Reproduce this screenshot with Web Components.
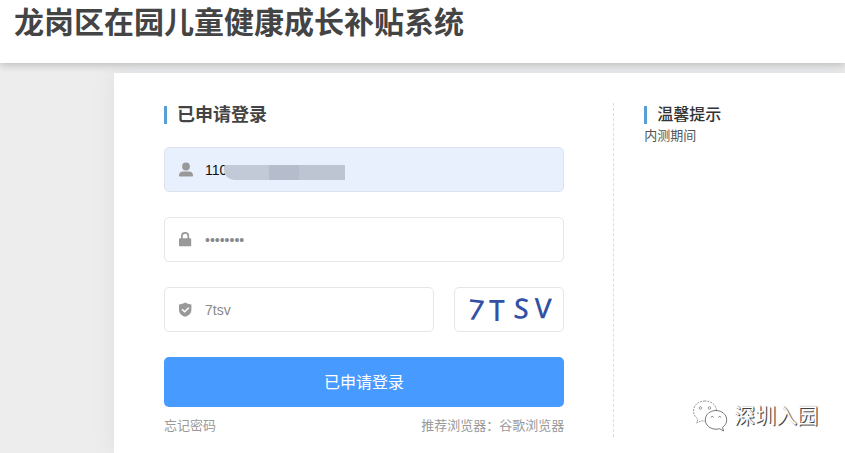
<!DOCTYPE html>
<html lang="zh-CN">
<head>
<meta charset="utf-8">
<meta name="viewport" content="width=device-width, initial-scale=1">
<title>龙岗区在园儿童健康成长补贴系统</title>
<style>
  body {
    margin: 0;
    background-color: #ededed;
    color: #444;
    font-family: "Liberation Sans", "Noto Sans CJK SC", sans-serif;
  }
</style>
</head>
<body>
<login-page>
  <page-header slot="header">龙岗区在园儿童健康成长补贴系统</page-header>
  <login-form slot="form"></login-form>
  <tips-panel slot="tips">内测期间</tips-panel>
  <account-mark slot="mark">深圳入园</account-mark>
</login-page>

<script>
function makeTemplate(html) {
  const template = document.createElement('template');
  template.innerHTML = html;
  return template;
}

// Shared base: clones the template of the class into an open shadow root
class BaseElement extends HTMLElement {
  connectedCallback() {
    if (this.shadowRoot) return;
    const shadowRoot = this.attachShadow({ mode: 'open' });
    shadowRoot.appendChild(this.constructor.template.content.cloneNode(true));
  }
}

class LoginPage extends BaseElement {
  static template = makeTemplate(`
    <style>
      :host {
        display: flex;
        flex-direction: column;
        min-height: 100vh;
        position: relative;
      }

      .card {
        flex: 1;
        display: grid;
        grid-template-columns: minmax(0, 13fr) minmax(0, 6fr);
        align-items: start;
        box-sizing: border-box;
        margin: 10px 0 0 114px;
        padding: 30px 0 16px;
        background-color: #fff;
        box-shadow: 0 0 20px #dcdee4;
      }

      .form {
        padding: 0 49px 0 50px;
        border-right: 1px dashed #ddd;
      }

      .tips {
        padding: 0 30px;
      }
    </style>
    <slot name="header"></slot>
    <main class="card">
      <div class="form"><slot name="form"></slot></div>
      <div class="tips"><slot name="tips"></slot></div>
    </main>
    <slot name="mark"></slot>
  `);
}

class PageHeader extends BaseElement {
  static template = makeTemplate(`
    <style>
      :host {
        display: block;
        position: relative;
        z-index: 1;
        padding: 0 14px 17px;
        background-color: #fff;
        box-shadow: 0 2px 8px #bbb;
        clip-path: inset(0 0 -10px 0);
      }

      h1 {
        margin: 0;
        font-size: 30px;
        line-height: 46px;
        font-weight: 700;
        color: #444;
      }
    </style>
    <header><h1><slot></slot></h1></header>
  `);
}

class SectionTitle extends BaseElement {
  static template = makeTemplate(`
    <style>
      :host {
        display: flex;
        align-items: center;
        gap: 10px;
        height: 24px;
        font-size: 18px;
        font-weight: 700;
      }

      :host([small]) {
        font-size: 16px;
        font-weight: 500;
        color: #333;
      }

      .bar {
        width: 3px;
        height: 18px;
        background-color: #5a9fd4;
      }

      h2 {
        margin: 0;
        font: inherit;
        line-height: 24px;
      }
    </style>
    <span class="bar"></span>
    <h2><slot></slot></h2>
  `);
}

// Text box with an icon on its left; attributes: label, type, value, filled
class IconField extends BaseElement {
  static template = makeTemplate(`
    <style>
      :host {
        display: flex;
        align-items: center;
        position: relative;
        box-sizing: border-box;
        height: 45px;
        min-width: 0;
        padding: 0 14px;
        gap: 12px;
        border: 1px solid #e6e6e6;
        border-radius: 5px;
        background-color: #fff;
        color: #888;
      }

      :host([filled]) {
        background-color: #e8f0fe;
        border-color: #dce3ee;
        color: #111;
      }

      label {
        display: flex;
        color: #999;
      }

      input {
        flex: 1;
        min-width: 0;
        height: 100%;
        padding: 0;
        border: 0;
        outline: 0;
        background: transparent;
        color: inherit;
        font-family: inherit;
        font-size: 14px;
      }
    </style>
    <label for="box"><slot name="icon"></slot></label>
    <input id="box">
    <slot></slot>
  `);

  connectedCallback() {
    super.connectedCallback();
    const input = this.shadowRoot.querySelector('input');
    input.type = this.getAttribute('type') || 'text';
    input.value = this.getAttribute('value') || '';
    input.setAttribute('aria-label', this.getAttribute('label'));
  }
}

class CaptchaCode extends BaseElement {
  static template = makeTemplate(`
    <style>
      :host {
        display: block;
      }

      button {
        display: flex;
        align-items: center;
        justify-content: center;
        box-sizing: border-box;
        width: 110px;
        height: 45px;
        padding: 0;
        border: 1px solid #e6e6e6;
        border-radius: 5px;
        background-color: #fff;
        cursor: pointer;
      }

      svg {
        overflow: visible;
      }

      text {
        font-family: "Noto Sans", sans-serif;
        font-size: 28px;
        font-weight: 500;
        fill: #3450a4;
      }
    </style>
    <button type="button" aria-label="7TSV">
      <svg width="108" height="43" viewBox="0 0 108 43">
        <text x="12 34 58 79" y="31 33 30 30" rotate="6 0 4 2">7TSV</text>
      </svg>
    </button>
  `);
}

class LoginForm extends BaseElement {
  static template = makeTemplate(`
    <style>
      :host {
        display: block;
      }

      form {
        display: flex;
        flex-direction: column;
        gap: 25px;
        margin-top: 20px;
      }

      .row {
        display: grid;
        grid-template-columns: minmax(0, 1fr) auto;
        gap: 20px;
      }

      .mask {
        position: absolute;
        left: 59px;
        top: 17px;
        width: 121px;
        height: 15px;
        border-radius: 2px 0 0 10px;
        background: linear-gradient(90deg, #c3cad7 0 45px, #b5bdcc 45px 75px, #bdc5d3 75px);
      }

      .submit {
        height: 50px;
        padding: 0 0 2px;
        border: 0;
        border-radius: 5px;
        background-color: #479aff;
        color: #fff;
        font-family: inherit;
        font-size: 16px;
        cursor: pointer;
      }

      .links {
        display: flex;
        justify-content: space-between;
        margin-top: 8px;
        font-size: 13px;
        line-height: 22px;
      }

      a {
        color: #999;
        text-decoration: none;
      }
    </style>
    <section-title>已申请登录</section-title>
    <form>
      <icon-field label="账号" value="110" filled>
        <svg slot="icon" width="14" height="16" viewBox="0 0 14 16" fill="currentColor">
          <circle cx="7" cy="4.5" r="3.9"/>
          <path d="M0 13.4C0 10.9 1.7 9.4 4 9.4h6c2.3 0 4 1.5 4 4 0 .6-.4 1-1 1H1c-.6 0-1-.4-1-1z"/>
        </svg>
        <span class="mask"></span>
      </icon-field>
      <icon-field label="密码" type="password" value="password">
        <svg slot="icon" width="14" height="16" viewBox="0 0 14 16" fill="currentColor">
          <path d="M.9 6.300h10.400c.5 0 .9.4.9.9v6.200c0 .5-.4.9-.9.9H.9c-.5 0-.9-.4-.9-.9V7.200c0-.5.4-.9.9-.9z"/>
          <path d="M2.900 7V4.100a3.200 3.200 0 0 1 6.400 0V7" fill="none" stroke="currentColor" stroke-width="1.700"/>
        </svg>
      </icon-field>
      <div class="row">
        <icon-field label="验证码" value="7tsv">
          <svg slot="icon" width="14" height="16" viewBox="0 0 14 16" fill="currentColor">
            <path d="M6.200.5c1.800 1.200 3.800 1.800 6.200 1.900v5.300c0 3.600-2.600 5.800-6.200 7.100C2.600 13.500 0 11.300 0 7.700V2.400C2.400 2.300 4.400 1.700 6.200.5z"/>
            <path d="M3 7.300l2.600 2.400 4.200-4" fill="none" stroke="#fff" stroke-width="1.500"/>
          </svg>
        </icon-field>
        <captcha-code></captcha-code>
      </div>
      <button class="submit" type="button">已申请登录</button>
    </form>
    <div class="links">
      <a href="#forgot">忘记密码</a>
      <a href="#browser">推荐浏览器：谷歌浏览器</a>
    </div>
  `);
}

class TipsPanel extends BaseElement {
  static template = makeTemplate(`
    <style>
      :host {
        display: block;
      }

      p {
        margin: 0;
        font-size: 13px;
        line-height: 18px;
        color: #555;
      }
    </style>
    <section-title small>温馨提示</section-title>
    <p><slot></slot></p>
  `);
}

// Account name that floats over the bottom right corner
class AccountMark extends BaseElement {
  static template = makeTemplate(`
    <style>
      :host {
        display: flex;
        align-items: center;
        gap: 6px;
        position: absolute;
        right: 27px;
        bottom: 20px;
        color: #fff;
        font-size: 21px;
        line-height: 34px;
        text-shadow: 1px 1px 0 #444, 1px 0 1px #777;
      }
    </style>
    <svg width="36" height="32" viewBox="0 0 36 32" fill="#fff" stroke="#999" stroke-width="1" stroke-linejoin="round">
      <path d="M13 1C6.400 1 1.500 5.200 1.500 11c0 3.300 1.700 6.200 4.400 8.100L4.600 23l4.700-2.300c1.200.3 2.400.5 3.700.5 6.400 0 11.500-4.400 11.500-10.200S19.500 1 13 1z" stroke-dasharray="2 1"/>
      <circle cx="8.500" cy="8" r="1.300"/>
      <circle cx="17.500" cy="8" r="1.300"/>
      <path d="M24 10.500c-6 0-10.700 4.100-10.700 9.300S18 29.200 24 29.200c1.300 0 2.500-.2 3.600-.5l4 2.300-1.100-3.600c2.600-1.700 4.200-4.400 4.200-7.500 0-5.200-4.800-9.400-10.700-9.400z" stroke="#777"/>
      <path d="M19 17.500c.4-1.500 2-1.500 2.400 0M26.500 17.500c.4-1.500 2-1.500 2.400 0" fill="none" stroke="#777"/>
    </svg>
    <span><slot></slot></span>
  `);
}

customElements.define('section-title', SectionTitle);
customElements.define('icon-field', IconField);
customElements.define('captcha-code', CaptchaCode);
customElements.define('login-form', LoginForm);
customElements.define('tips-panel', TipsPanel);
customElements.define('account-mark', AccountMark);
customElements.define('page-header', PageHeader);
customElements.define('login-page', LoginPage);
</script>
</body>
</html>
